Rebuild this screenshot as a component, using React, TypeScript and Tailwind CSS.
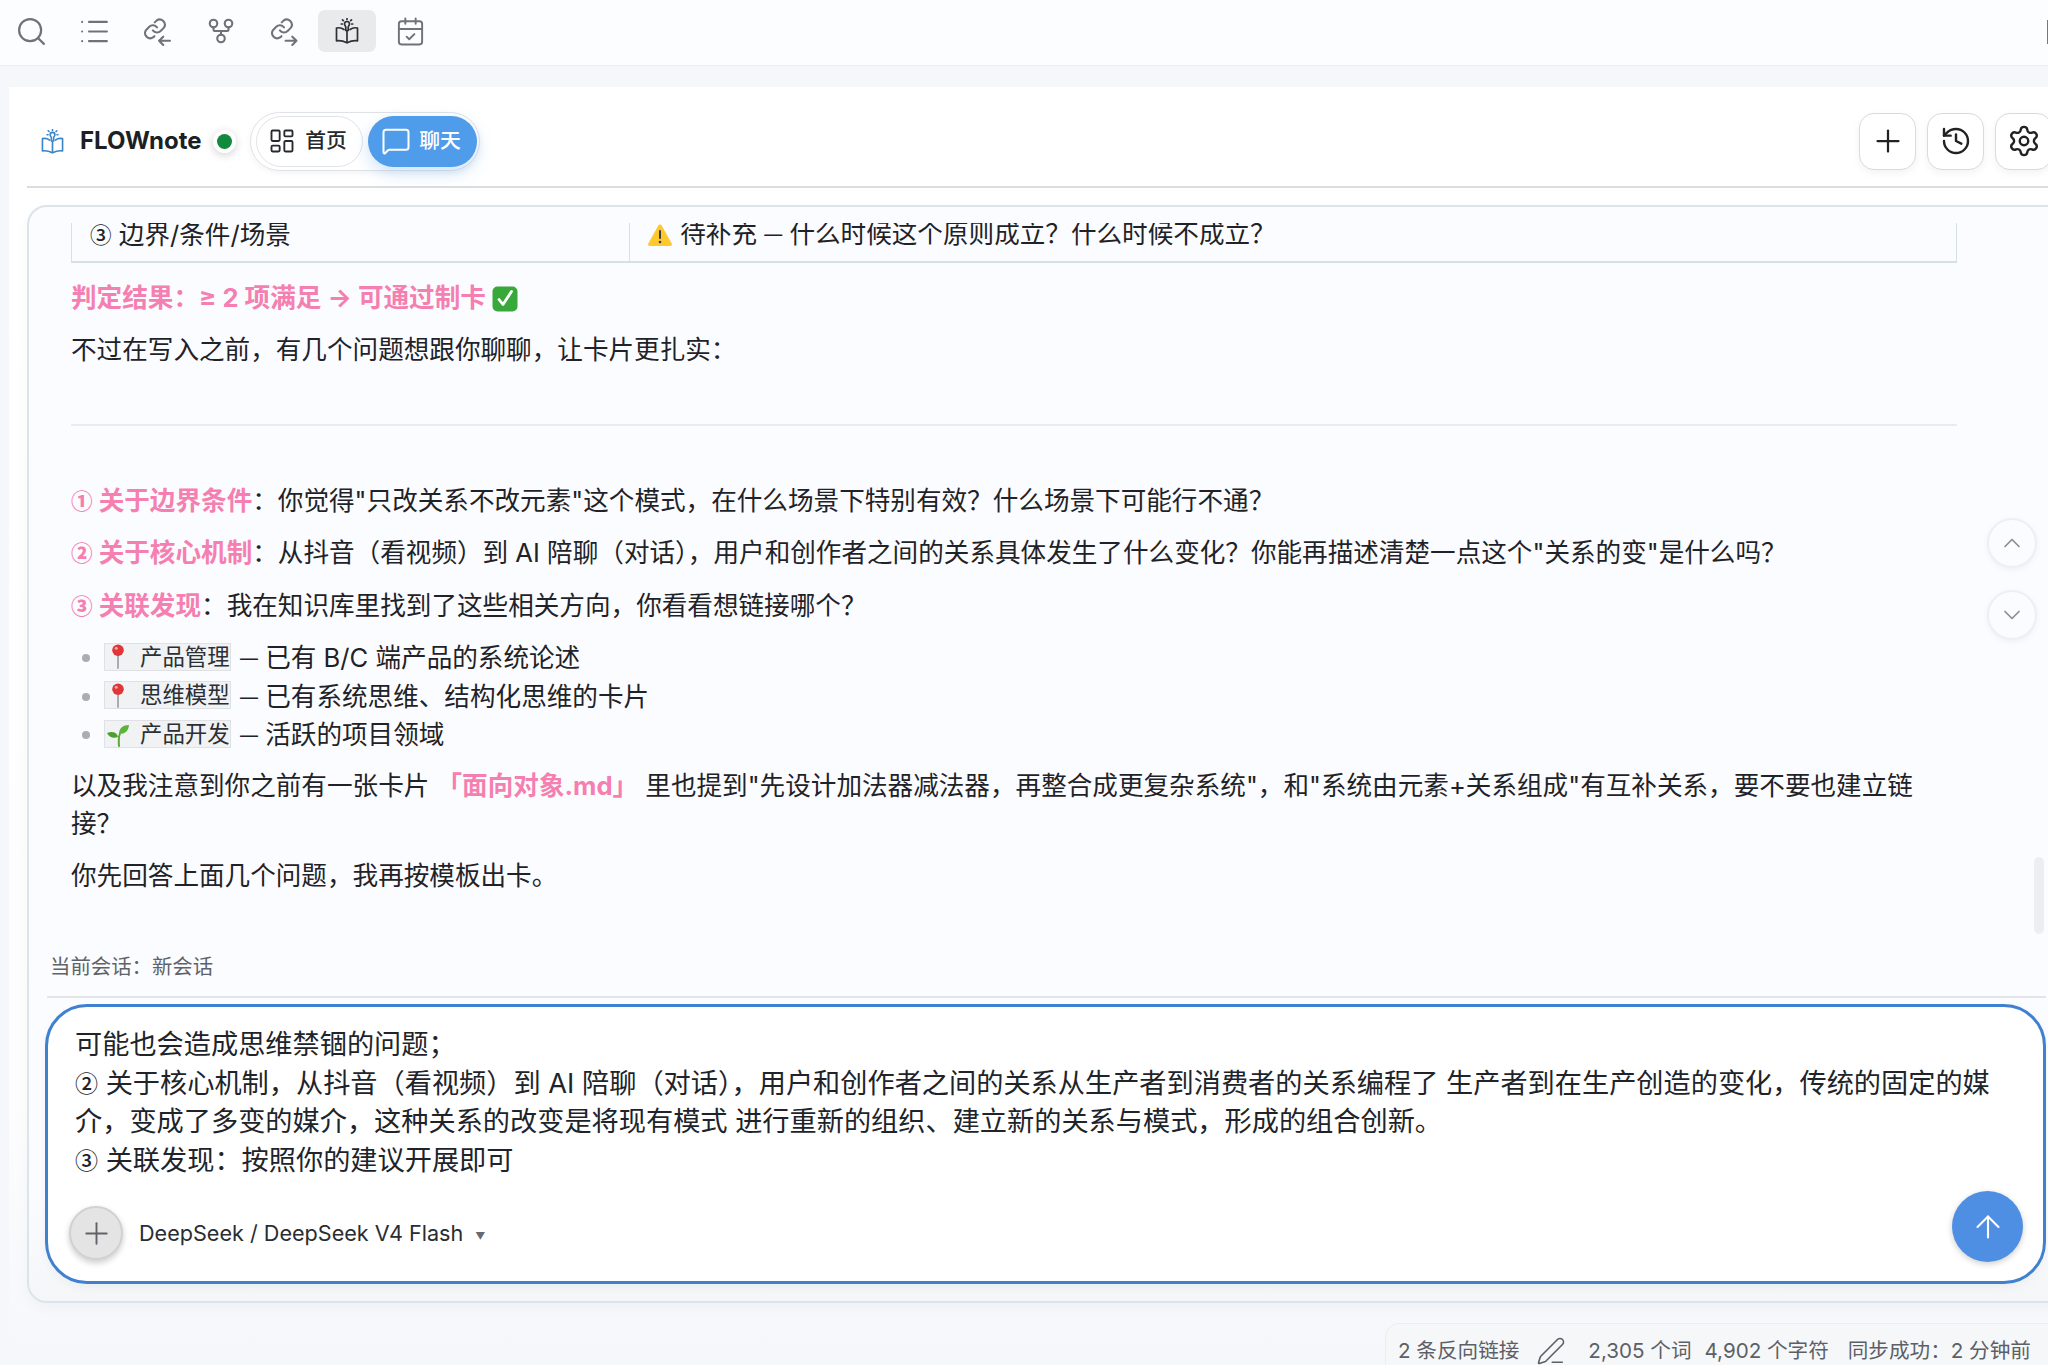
import React from "react";
import { Search, List, GitFork, CalendarCheck, LayoutDashboard, MessageSquare, Plus, History, Settings, ChevronUp, ChevronDown, ArrowUp, PenLine } from "lucide-react";

const LinkArrow = ({ dir, className }: { dir: "in" | "out"; className?: string }) => (
  <svg viewBox="0 0 28 28" fill="none" stroke="currentColor" strokeWidth="2" strokeLinecap="round" strokeLinejoin="round" className={className}>
    <path d="M10.500 13a5 5 0 0 0 7.500.5l3-3a5 5 0 0 0-7-7l-1.700 1.700" />
    <path d="M14.500 10a5 5 0 0 0-7.500-.5l-3 3a5 5 0 0 0 7 7l1-1" />
    {dir === "in" ? <path d="M27 23H16.500m4-4-4 4 4 4" /> : <path d="M16 23h10.500m-4-4 4 4-4 4" />}
  </svg>
);

const BookBulb = ({ className }: { className?: string }) => (
  <svg viewBox="0 0 24 26" fill="none" stroke="currentColor" strokeWidth="1.700" strokeLinecap="round" strokeLinejoin="round" className={className}>
    <path d="M9 11.500C7 10 4 9.500 1.500 10v12.800c3-.5 6.500 0 10.500 2 4-2 7.500-2.500 10.500-2V10c-2.500-.5-5.500 0-7.500 1.500" />
    <path d="M12 13v11.500" />
    <path d="M9.500 6a2.500 2.500 0 1 1 5 0c0 1.300-1.100 1.800-1.300 3v3.500h-2.400V9c-.2-1.200-1.300-1.700-1.300-3z" />
    <path d="M12 .7v.8M7.500 1.800l.8.800M16.500 1.800l-.8.800M6.300 6h1M16.700 6h1" />
  </svg>
);

const Pin = () => (
  <svg viewBox="0 0 20 28" className="w-[20px] h-[27px] shrink-0">
    <rect x="9" y="11" width="2" height="16" rx="1" fill="#a9a9ad" />
    <circle cx="10" cy="7.500" r="6" fill="#e0363a" />
    <circle cx="8.200" cy="5.500" r="1.600" fill="#f6a3a3" />
  </svg>
);

const Sprout = () => (
  <svg viewBox="0 0 24 26" className="w-[24px] h-[26px] shrink-0">
    <path d="M13 25c-.5-6-.2-10 1-13" stroke="#5fa83a" strokeWidth="2" fill="none" strokeLinecap="round" />
    <path d="M13 13c0-6 4-9 10-9-.5 6-4 9-10 9z" fill="#5fb33c" />
    <path d="M12 16C11 11 6 10 1 12c2 4 6 6 11 4z" fill="#4c9f30" />
  </svg>
);

const Warn = () => (
  <svg viewBox="0 0 26 24" className="w-[26px] h-[24px] inline-block align-[-4px]">
    <path d="M13 1.500c.7 0 1.300.4 1.700 1l10 18c.7 1.300-.1 2.500-1.500 2.500H2.800c-1.400 0-2.200-1.200-1.500-2.500l10-18c.4-.6 1-1 1.700-1z" fill="#fdc92e" />
    <rect x="12" y="7" width="2" height="9" rx="1" fill="#3b3b3b" />
    <circle cx="13" cy="19" r="1.300" fill="#3b3b3b" />
  </svg>
);

const Check = () => (
  <svg viewBox="0 0 26 26" className="w-[26px] h-[26px] inline-block align-[-5px]">
    <rect x="0.500" y="0.500" width="25" height="25" rx="5" fill="#39a83a" />
    <path d="M7 13.500l4 5 8.500-13" stroke="#fff" strokeWidth="2.800" fill="none" strokeLinecap="round" strokeLinejoin="round" />
  </svg>
);

const Num = ({ children }: { children: React.ReactNode }) => (
  <span className="font-['Noto_Sans_CJK_SC',sans-serif] font-medium text-[21.600px] leading-none align-[1px]">{children}</span>
);

const InputNum = ({ children }: { children: React.ReactNode }) => (
  <span className="font-['Noto_Sans_CJK_SC',sans-serif] font-medium text-[23px] leading-none align-[1px]">{children}</span>
);

const PinkNum = ({ children }: { children: React.ReactNode }) => (
  <span className="font-['Noto_Sans_CJK_SC',sans-serif] font-black text-[21.600px] leading-none align-[1px]">{children}</span>
);

const Dash = () => <span className="text-[18px] leading-none align-[2px]">—</span>;

const Chip = ({ icon, text }: { icon: React.ReactNode; text: string }) => (
  <span className="inline-flex items-center w-[127px] h-[28px] pl-[1px] bg-[#f1f2f4] border border-[#dfe1e4] text-[22.400px] leading-[28px] text-[#2b2f33] mr-[9px] align-[-3px] overflow-hidden whitespace-nowrap">
    <span className="w-[24px] flex justify-center shrink-0">{icon}</span>
    <span className="ml-[10px]">{text}</span>
  </span>
);

const Bullet = ({ children }: { children: React.ReactNode }) => (
  <div className="flex items-center h-[38.500px]">
    <span className="w-[8px] h-[8px] rounded-full bg-[#a9aeb4] ml-[11px] mr-[14px] shrink-0" />
    <span>{children}</span>
  </div>
);

const TopIcon = ({ children, active }: { children: React.ReactNode; active?: boolean }) => (
  <div className={`w-[58px] h-[42px] rounded-[7px] flex items-center justify-center mr-[5px] ${active ? "bg-[#e9eaec] text-[#2e3033]" : "text-[#6f7276]"}`}>
    {children}
  </div>
);

const SquareBtn = ({ children }: { children: React.ReactNode }) => (
  <div className="w-[57px] h-[57px] rounded-[15px] bg-white border border-[#d9dadc] shadow-[0_3px_8px_rgba(0,0,0,0.05)] flex items-center justify-center text-[#222]">
    {children}
  </div>
);

const Pink = ({ children }: { children: React.ReactNode }) => <span className="font-bold text-[#f47fb0]">{children}</span>;

export default function App() {
  return (
    <div lang="zh-CN" className="w-[2048px] h-[1365px] overflow-hidden relative flex flex-col bg-[#f5f7fb] font-['Inter','Noto_Sans_CJK_SC',sans-serif] text-[25.600px] leading-[38.400px] text-[#1f2327]">
      {/* top ribbon */}
      <div className="h-[66px] shrink-0 bg-[#fcfdfe] border-b border-[#eceef1] flex items-center pl-[3px] pb-[3px] relative">
        <TopIcon><Search size={33} strokeWidth={1.6} className="-ml-[2px]" /></TopIcon>
        <TopIcon><List size={33} strokeWidth={1.5} className="-ml-[2px]" /></TopIcon>
        <TopIcon><LinkArrow dir="in" className="w-[29px] h-[29px] -ml-[3px]" /></TopIcon>
        <TopIcon><GitFork size={30} strokeWidth={1.7} /></TopIcon>
        <TopIcon><LinkArrow dir="out" className="w-[29px] h-[29px] -ml-[2px]" /></TopIcon>
        <TopIcon active><BookBulb className="w-[24px] h-[26px]" /></TopIcon>
        <TopIcon><CalendarCheck size={31} strokeWidth={1.5} /></TopIcon>
        <div className="absolute right-0 top-[20px] w-[1px] h-[24px] bg-[#777]" />
      </div>

      {/* main panel */}
      <div className="flex-1 min-h-0 mt-[21px] ml-[9px] w-[2060px] flex flex-col pl-[18px] bg-[linear-gradient(to_bottom,#ffffff_0%,#fdfdfe_80%,#f5f7fb_100%)]">
        {/* header */}
        <div className="h-[101px] shrink-0 border-b-2 border-[#dadde0] flex items-center justify-between pl-[14px] pr-[17px] pt-[9px]">
          <div className="flex items-center">
            <BookBulb className="w-[23px] h-[25px] text-[#3a86c8]" />
            <span className="ml-[16px] font-bold text-[24px] text-[#1c1f23]">FLOWnote</span>
            <span className="ml-[11px] w-[23px] h-[23px] rounded-full bg-white shadow-[0_2px_8px_rgba(0,0,0,0.18)] flex items-center justify-center">
              <span className="w-[15px] h-[15px] rounded-full bg-[#118a3c]" />
            </span>
            <div className="ml-[14px] h-[59px] w-[230px] rounded-full border border-[#dfe2e6] shadow-[0_2px_6px_rgba(0,0,0,0.05)] flex items-center pl-[5px] gap-[5px]">
              <div className="w-[107px] h-[51px] rounded-full bg-white border border-[#e1e3e6] flex items-center justify-center gap-[9px] text-[20.800px] font-medium text-[#26292d] pr-[3px]">
                <LayoutDashboard size={28} strokeWidth={1.6} />
                <span>首页</span>
              </div>
              <div className="w-[109px] h-[51px] rounded-full bg-[#4f9ceb] shadow-[0_6px_16px_rgba(79,156,235,0.28)] flex items-center justify-center gap-[8px] text-[20.800px] font-medium text-white pr-[2px]">
                <MessageSquare size={30} strokeWidth={1.6} />
                <span>聊天</span>
              </div>
            </div>
          </div>
          <div className="flex items-center gap-[11px]">
            <SquareBtn><Plus size={36} strokeWidth={1.5} /></SquareBtn>
            <SquareBtn><History size={32} strokeWidth={1.8} /></SquareBtn>
            <SquareBtn><Settings size={34} strokeWidth={1.7} /></SquareBtn>
          </div>
        </div>

        {/* chat card */}
        <div className="mt-[17px] h-[1098px] shrink-0 rounded-[20px] border-2 border-[#dbe4ea] bg-[linear-gradient(to_bottom,#fbfcff_0%,#fbfcff_90%,#f4f6f8_100%)] flex flex-col pt-[16px] relative shadow-[0_6px_14px_rgba(0,0,0,0.03)]">
          {/* messages */}
          <div className="h-[718px] shrink-0 overflow-hidden pl-[42px]">
            <div className="w-[1886px]">
              <div className="flex border-x border-b-2 border-[#d6e0e7] h-[40px] leading-[22px]">
                <div className="w-[558px] pl-[18px] border-r border-[#d6e0e7]"><Num>③</Num> 边界/条件/场景</div>
                <div className="pl-[17px]"><Warn /> 待补充 <Dash /> 什么时候这个原则成立？什么时候不成立？</div>
              </div>
              <p className="mt-[16px] font-bold text-[#f47fb0]">判定结果：≥ 2 项满足 → 可通过制卡 <Check /></p>
              <p className="mt-[14px]">不过在写入之前，有几个问题想跟你聊聊，让卡片更扎实：</p>
              <div className="mt-[54px] h-[2px] bg-[#e9ebee]" />
              <p className="mt-[56px]"><Pink><PinkNum>①</PinkNum> 关于边界条件</Pink>：你觉得"只改关系不改元素"这个模式，在什么场景下特别有效？什么场景下可能行不通？</p>
              <p className="mt-[14px]"><Pink><PinkNum>②</PinkNum> 关于核心机制</Pink>：从抖音（看视频）到 AI 陪聊（对话），用户和创作者之间的关系具体发生了什么变化？你能再描述清楚一点这个"关系的变"是什么吗？</p>
              <p className="mt-[14px]"><Pink><PinkNum>③</PinkNum> 关联发现</Pink>：我在知识库里找到了这些相关方向，你看看想链接哪个？</p>
              <div className="mt-[14px]">
                <Bullet><Chip icon={<Pin />} text="产品管理" /><Dash /> 已有 B/C 端产品的系统论述</Bullet>
                <Bullet><Chip icon={<Pin />} text="思维模型" /><Dash /> 已有系统思维、结构化思维的卡片</Bullet>
                <Bullet><Chip icon={<Sprout />} text="产品开发" /><Dash /> 活跃的项目领域</Bullet>
              </div>
              <p className="mt-[12px]">以及我注意到你之前有一张卡片 <Pink>「面向对象.md」</Pink> 里也提到"先设计加法器减法器，再整合成更复杂系统"，和"系统由元素+关系组成"有互补关系，要不要也建立链接？</p>
              <p className="mt-[14px]">你先回答上面几个问题，我再按模板出卡。</p>
            </div>
          </div>

          {/* session label */}
          <div className="h-[57px] shrink-0 ml-[18px] w-[1999px] border-b-2 border-[#e3e5e8] pl-[3px] pt-[11px] text-[20.400px] leading-[30px] text-[#5e6369]">当前会话：新会话</div>

          {/* input */}
          <div className="mt-[6px] ml-[16px] w-[2001px] h-[280px] rounded-[42px] border-[3px] border-[#3f80cf] bg-white flex flex-col relative pl-[27px] pr-[36px] pt-[19px] shadow-[0_4px_10px_rgba(0,0,0,0.04)]">
            <div className="text-[27.200px] leading-[38.500px] text-[#20242a]">
              <p>可能也会造成思维禁锢的问题；</p>
              <p><InputNum>②</InputNum> 关于核心机制，从抖音（看视频）到 AI 陪聊（对话），用户和创作者之间的关系从生产者到消费者的关系编程了 生产者到在生产创造的变化，传统的固定的媒介，变成了多变的媒介，这种关系的改变是将现有模式 进行重新的组织、建立新的关系与模式，形成的组合创新。</p>
              <p><InputNum>③</InputNum> 关联发现：按照你的建议开展即可</p>
            </div>
            <div className="flex items-center -ml-[6px] mt-[26px]">
              <div className="w-[54px] h-[54px] rounded-full bg-[#e4e4e5] border-2 border-[#d0d1d3] shadow-[0_3px_6px_rgba(0,0,0,0.2)] flex items-center justify-center text-[#5f6266]">
                <Plus size={35} strokeWidth={1.3} />
              </div>
              <span className="ml-[16px] text-[21.600px] text-[#2a2d31]">DeepSeek / DeepSeek V4 Flash</span>
              <span className="ml-[12px] mt-[5px] text-[10px] leading-none text-[#666a70]">▼</span>
            </div>
            <div className="absolute right-[20px] bottom-[19px] w-[71px] h-[71px] rounded-full bg-[#4f8fe3] shadow-[0_2px_6px_rgba(0,0,0,0.2)] flex items-center justify-center text-white">
              <ArrowUp size={36} strokeWidth={1.4} />
            </div>
          </div>

          {/* floating scroll buttons */}
          <div className="absolute left-[1958px] top-[311px] w-[50px] h-[50px] rounded-full bg-[#fbfcff] border-2 border-[#eeeff1] shadow-[0_2px_6px_rgba(0,0,0,0.05)] flex items-center justify-center text-[#8b8e93]">
            <ChevronUp size={28} strokeWidth={1.5} />
          </div>
          <div className="absolute left-[1958px] top-[383px] w-[50px] h-[50px] rounded-full bg-[#fbfcff] border-2 border-[#eeeff1] shadow-[0_2px_6px_rgba(0,0,0,0.05)] flex items-center justify-center text-[#8b8e93]">
            <ChevronDown size={28} strokeWidth={1.5} />
          </div>
          <div className="absolute left-[2005px] top-[650px] w-[10px] h-[77px] rounded-full bg-[#eceef1]" />
        </div>
      </div>

      {/* status bar */}
      <div className="absolute left-[1385px] top-[1323px] w-[680px] h-[60px] rounded-tl-[14px] border border-[#eceef0] bg-[#f6f7f9] flex items-start pt-[12px] pl-[12px] text-[20.600px] leading-[30px] text-[#5c6066]">
        <span>2 条反向链接</span>
        <PenLine size={30} strokeWidth={1.3} className="ml-[17px]" />
        <span className="ml-[22px]">2,305 个词</span>
        <span className="ml-[13px]">4,902 个字符</span>
        <span className="ml-[19px]">同步成功：2 分钟前</span>
      </div>
    </div>
  );
}
